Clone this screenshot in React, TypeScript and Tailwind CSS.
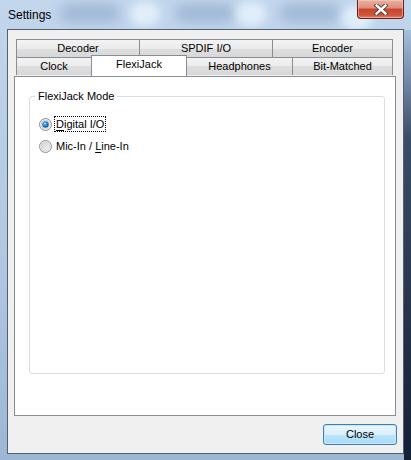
import React from "react";

const tabCls =
  "h-[18px] -ml-px first:ml-0 flex items-center justify-center border-l border-t border-r border-[#898c95] bg-[linear-gradient(#f3f3f3,#ebebeb_50%,#dedede_50%,#d8d8d8)] text-[11px] leading-none text-black";

const Radio = ({ checked }: { checked?: boolean }) => (
  <svg width="13" height="13" viewBox="0 0 13 13" className="shrink-0">
    <defs>
      <linearGradient id={checked ? "rgOn" : "rgOff"} x1="0" y1="0" x2="1" y2="1">
        <stop offset="0" stopColor="#cfcfcf" />
        <stop offset="1" stopColor="#f7f7f7" />
      </linearGradient>
      <radialGradient id="rgDot" cx="0.4" cy="0.35" r="0.7">
        <stop offset="0" stopColor="#a8dcff" />
        <stop offset="0.45" stopColor="#2a8ad4" />
        <stop offset="1" stopColor="#0b4e91" />
      </radialGradient>
    </defs>
    <circle cx="6.5" cy="6.5" r="6" fill="#f4f4f4" stroke="#8e8f8f" strokeWidth="1" />
    <circle cx="6.5" cy="6.5" r="4.5" fill={`url(#${checked ? "rgOn" : "rgOff"})`} stroke="#c4c4c4" strokeWidth="0.6" />
    {checked && <circle cx="6.5" cy="6.5" r="3.2" fill="url(#rgDot)" />}
  </svg>
);

const App = () => {
  return (
    <div className="w-[411px] h-[460px] relative overflow-hidden bg-[linear-gradient(#c2d6ec,#aec6e1_60%,#9db6d3)] font-['Liberation_Sans',Arial,sans-serif] text-black">
      {/* glass blur behind title bar */}
      <div className="absolute left-[60px] top-[4px] w-[60px] h-[18px] rounded-full bg-[#8aa6c8] blur-[6px] opacity-60" />
      <div className="absolute left-[130px] top-[2px] w-[30px] h-[24px] rounded-full bg-[#e4f1fc] blur-[4px] opacity-90" />
      <div className="absolute left-[175px] top-[4px] w-[60px] h-[18px] rounded-full bg-[#8aa6c8] blur-[6px] opacity-60" />
      <div className="absolute left-[236px] top-[2px] w-[30px] h-[24px] rounded-full bg-[#e4f1fc] blur-[4px] opacity-90" />
      <div className="absolute left-[280px] top-[4px] w-[60px] h-[18px] rounded-full bg-[#8aa6c8] blur-[6px] opacity-60" />
      <div className="absolute left-[342px] top-[6px] w-[30px] h-[24px] rounded-full bg-[#e4f1fc] blur-[4px] opacity-90" />
      <div className="absolute right-0 top-[30px] w-[7px] h-[430px] bg-[linear-gradient(#a6bfdc,#3a4c68_25%,#142033)]" />

      <div className="relative flex flex-col h-full">
        <div className="h-[29px] flex items-center pl-[8px] pt-[1px] text-[12px]">Settings</div>
        <div className="mx-[7px] h-[425px] border border-[#55606e] bg-[#f0f0f0] flex flex-col pl-[6px] pr-[7px] pt-[9px]">
          {/* tab rows */}
          <div className="flex ml-[2px]">
            <div className={`${tabCls} w-[124px]`}>Decoder</div>
            <div className={`${tabCls} w-[134px]`}>SPDIF I/O</div>
            <div className={`${tabCls} w-[121px]`}>Encoder</div>
          </div>
          <div className="flex items-start ml-[2px]">
            <div className={`${tabCls} w-[76px]`}>Clock</div>
            <div className="relative z-10 -ml-px -mt-[2px] w-[96px] h-[21px] flex items-start justify-center pt-[3px] border-l border-t border-r border-[#898c95] bg-white text-[11px] leading-none">
              FlexiJack
            </div>
            <div className={`${tabCls} w-[107px]`}>Headphones</div>
            <div className={`${tabCls} w-[101px]`}>Bit-Matched</div>
          </div>

          {/* pane */}
          <div className="h-[340px] border border-[#898c95] bg-white pl-[14px] pt-[19px]">
            <div className="relative w-[356px] h-[278px] border border-[#d5dfe5] rounded-[3px] pl-[9px] pt-[19px] text-[11px]">
              <span className="absolute -top-[7px] left-[5px] bg-white px-[3px] leading-[13px]">FlexiJack Mode</span>
              <div className="flex items-center h-[16px] gap-[2px]">
                <Radio checked />
                <span className="border border-dotted border-black px-[1px] leading-[14px]">
                  <span className="underline underline-offset-2">D</span>igital I/O
                </span>
              </div>
              <div className="flex items-center h-[16px] gap-[2px] mt-[6px]">
                <Radio />
                <span className="border border-transparent px-[1px] leading-[14px]">
                  Mic-In / <span className="underline underline-offset-2">L</span>ine-In
                </span>
              </div>
            </div>
          </div>

          {/* buttons */}
          <div className="flex justify-end mt-[8px] -mr-px">
            <button className="w-[74px] h-[21px] rounded-[3px] border border-[#3c7fb1] bg-[linear-gradient(#eaf6fd,#d9f0fc_50%,#bee6fd_50%,#a7d9f5)] shadow-[inset_0_0_0_1px_#c8e8fa] text-[11px] leading-none">
              Close
            </button>
          </div>
        </div>
      </div>

      {/* caption close button */}
      <div className="absolute left-[357px] top-0 w-[47px] h-[19px] rounded-b-[4px] border border-t-0 border-[#5e2419] bg-[linear-gradient(#eab0a2,#dd8d7a_45%,#c7452e_50%,#d0553c_85%,#e58a6a)] shadow-[inset_0_0_0_1px_rgba(255,210,200,0.5)] flex items-center justify-center">
        <svg width="14" height="11" viewBox="0 0 14 11">
          <path d="M2.5 1.5 L11.5 9.5 M11.5 1.5 L2.5 9.5" stroke="#4a3a38" strokeWidth="4.2" strokeLinecap="square" />
          <path d="M2.5 1.5 L11.5 9.5 M11.5 1.5 L2.5 9.5" stroke="#ffffff" strokeWidth="2.4" strokeLinecap="square" />
        </svg>
      </div>
    </div>
  );
};

export default App;
